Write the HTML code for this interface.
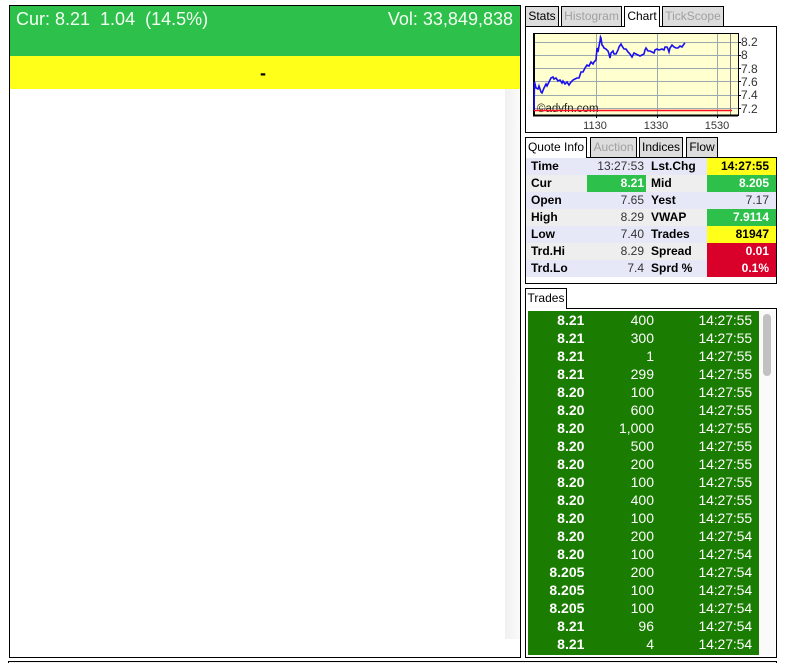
<!DOCTYPE html>
<html><head><meta charset="utf-8"><style>
html,body{margin:0;padding:0;background:#fff;width:786px;height:663px;overflow:hidden}
body{font-family:"Liberation Sans",sans-serif;position:relative}
.a,.a *{box-sizing:border-box}
.a{position:absolute}
.tab{position:absolute;top:6px;height:21px;border:1px solid #000;background:#ddd;font-size:12px;line-height:19px;text-align:center;color:#000;box-sizing:border-box}
.off{color:#a0a0a0}
.on{background:#fff;border-bottom:none;z-index:3}
.r{position:absolute;left:1px;width:250px;height:17px;font-size:12px;line-height:17px}
.r div{position:absolute;top:0;height:17px}
.l{left:5px;font-weight:bold}
.v{left:61px;width:59px;text-align:right;padding-right:2px;color:#333}
.l2{left:125px;font-weight:bold}
.v2{left:181px;width:69px;text-align:right;padding-right:7px;color:#333}
.g{background:#2dc04a;color:#fff!important;font-weight:bold}
.y{background:#ffff19;color:#000!important;font-weight:bold}
.d{background:#d9002a;color:#fff!important;font-weight:bold}
.t{position:absolute;left:0;width:231px;height:18px;font-size:14px;line-height:18px;color:#fff}
.t span{position:absolute;top:0;text-align:right}
.p{right:174.6px;font-weight:bold}
.q{right:105px}
.m{right:7px;letter-spacing:-.12px}
</style></head><body>

<div class="a" style="left:9px;top:5px;width:512px;height:653px;border:1px solid #000;background:#fff"></div>
<div class="a" style="left:10px;top:6px;width:510px;height:50px;background:#2dc04a;color:#f4fff4;font-size:18px;line-height:27px">
<span style="position:absolute;left:6px;top:0;white-space:pre">Cur: 8.21  1.04  (14.5%)</span>
<span style="position:absolute;right:7px;top:0">Vol: 33,849,838</span></div>
<div class="a" style="left:10px;top:56px;width:510px;height:33px;background:#ffff19;text-align:center;font-size:18px;font-weight:bold;line-height:35px;color:#000;padding-right:4px">-</div>
<div class="a" style="left:505px;top:89px;width:15px;height:550px;background:linear-gradient(90deg,#f0f0f0,#fbfbfb)"></div>

<div class="tab" style="left:525px;width:34px">Stats</div>
<div class="tab off" style="left:561px;width:61px">Histogram</div>
<div class="tab on" style="left:624px;width:36px;height:21px">Chart</div>
<div class="tab off" style="left:662px;width:62px">TickScope</div>
<div class="a" style="left:525px;top:26px;width:252px;height:107px;border:1px solid #000;background:#fff"></div>

<svg class="a" style="left:528px;top:30px" width="230" height="100" viewBox="0 0 230 100">
<rect x="5.5" y="3.5" width="205" height="82" fill="#ffffcf" stroke="#000"/>
<g stroke="#9aa9b0" stroke-width="1" fill="none">
<path d="M6 12.5H210M6 25.5H210M6 38.5H210M6 51.5H210M6 65.5H210M6 78.5H210M68.5 4V85M129.5 4V85M189.5 4V85"/>
</g>
<path d="M202.5 4V85" stroke="#8a7a7a"/>
<path d="M6 4V86M5 85.5H210" stroke="#000" stroke-width="2" fill="none"/>
<path d="M68.5 85v3M129.5 85v3M189.5 85v3M210 12.5h3M210 25.5h3M210 38.5h3M210 51.5h3M210 65.5h3M210 78.5h3" stroke="#000" fill="none"/>
<text x="9" y="82" font-family="Liberation Sans" font-size="11.5" fill="#222">©advfn.com</text>
<path d="M6 80.5H204" stroke="#ff1020" stroke-width="1.4"/>
<polyline fill="none" stroke="#1a10ee" stroke-width="1.6" points="6,80 6.5,52 8,58 10,59 11,56 13,62 14,63 16,58 18,54 19,56 21,52 23,48 25,47 26,49 28,48 30,51 32,50 34,53 35,51 37,54 39,52 41,55 43,52 45,50 47,49 49,48 51,48 53,42 55,42 57,38 59,35 61,36 63,32 65,34 66,32 68,30 69,18 70,22 71,16 72,11 72.5,7 73,8 74,15 75,16 76,18 78,19 80,21 81,24 82,28 83,23 85,21 86,24 88,24 90,20 91,17 93,14 94,16 96,19 98,19 100,22 102,24 104,27 106,23 108,24 110,25 112,26 114,25 116,24 117,20 118,18 120,21 122,21 124,22 126,23 127,20 129,19 131,20 134,19 136,20 137,17 139,17 140,19 141,22 142,18 144,15 146,17 148,18 150,18 152,16 154,17 156,14 157,13"/>
<g font-family="Liberation Sans" font-size="12" fill="#333">
<text x="213" y="16">8.2</text>
<text x="213" y="29">8</text>
<text x="213" y="43">7.8</text>
<text x="213" y="56">7.6</text>
<text x="213" y="69">7.4</text>
<text x="213" y="83">7.2</text>
</g>
<g font-family="Liberation Sans" font-size="11" fill="#333" text-anchor="middle">
<text x="67" y="99">1130</text><text x="128" y="99">1330</text><text x="189" y="99">1530</text>
</g>
</svg>

<div class="tab on" style="left:525px;top:137px;width:62px;height:21px">Quote Info</div>
<div class="tab off" style="left:590px;top:137px;width:47px">Auction</div>
<div class="tab" style="left:639px;top:137px;width:44px">Indices</div>
<div class="tab" style="left:686px;top:137px;width:32px">Flow</div>

<div class="a" style="left:525px;top:157px;width:252px;height:127px;border:1px solid #000;background:#fff">
<div class="r" style="left:0;top:0;background:#e6e8f8"><div class="l">Time</div><div class="v">13:27:53</div><div class="l2">Lst.Chg</div><div class="v2 y">14:27:55</div></div>
<div class="r" style="left:0;top:17px;background:#eee"><div class="l">Cur</div><div class="v g">8.21</div><div class="l2">Mid</div><div class="v2 g">8.205</div></div>
<div class="r" style="left:0;top:34px;background:#e6e8f8"><div class="l">Open</div><div class="v">7.65</div><div class="l2">Yest</div><div class="v2">7.17</div></div>
<div class="r" style="left:0;top:51px;background:#eee"><div class="l">High</div><div class="v">8.29</div><div class="l2">VWAP</div><div class="v2 g">7.9114</div></div>
<div class="r" style="left:0;top:68px;background:#e6e8f8"><div class="l">Low</div><div class="v">7.40</div><div class="l2">Trades</div><div class="v2 y">81947</div></div>
<div class="r" style="left:0;top:85px;background:#eee"><div class="l">Trd.Hi</div><div class="v">8.29</div><div class="l2">Spread</div><div class="v2 d">0.01</div></div>
<div class="r" style="left:0;top:102px;background:#e6e8f8"><div class="l">Trd.Lo</div><div class="v">7.4</div><div class="l2">Sprd %</div><div class="v2 d">0.1%</div></div>
</div>

<div class="tab on" style="left:525px;top:288px;width:42px;height:21px">Trades</div>
<div class="a" style="left:525px;top:308px;width:252px;height:350px;border:1px solid #000;background:#fff"></div>
<div class="a" style="left:759px;top:311px;width:16px;height:344px;background:#fafafa"></div>
<div class="a" style="left:763px;top:314px;width:8px;height:62px;border-radius:4px;background:#c1c1c1"></div>
<div class="a" style="left:528px;top:311px;width:231px;height:344px;background:#1a7c00;overflow:hidden">
<div class="t" style="top:0"><span class="p">8.21</span><span class="q">400</span><span class="m">14:27:55</span></div>
<div class="t" style="top:18px"><span class="p">8.21</span><span class="q">300</span><span class="m">14:27:55</span></div>
<div class="t" style="top:36px"><span class="p">8.21</span><span class="q">1</span><span class="m">14:27:55</span></div>
<div class="t" style="top:54px"><span class="p">8.21</span><span class="q">299</span><span class="m">14:27:55</span></div>
<div class="t" style="top:72px"><span class="p">8.20</span><span class="q">100</span><span class="m">14:27:55</span></div>
<div class="t" style="top:90px"><span class="p">8.20</span><span class="q">600</span><span class="m">14:27:55</span></div>
<div class="t" style="top:108px"><span class="p">8.20</span><span class="q">1,000</span><span class="m">14:27:55</span></div>
<div class="t" style="top:126px"><span class="p">8.20</span><span class="q">500</span><span class="m">14:27:55</span></div>
<div class="t" style="top:144px"><span class="p">8.20</span><span class="q">200</span><span class="m">14:27:55</span></div>
<div class="t" style="top:162px"><span class="p">8.20</span><span class="q">100</span><span class="m">14:27:55</span></div>
<div class="t" style="top:180px"><span class="p">8.20</span><span class="q">400</span><span class="m">14:27:55</span></div>
<div class="t" style="top:198px"><span class="p">8.20</span><span class="q">100</span><span class="m">14:27:55</span></div>
<div class="t" style="top:216px"><span class="p">8.20</span><span class="q">200</span><span class="m">14:27:54</span></div>
<div class="t" style="top:234px"><span class="p">8.20</span><span class="q">100</span><span class="m">14:27:54</span></div>
<div class="t" style="top:252px"><span class="p">8.205</span><span class="q">200</span><span class="m">14:27:54</span></div>
<div class="t" style="top:270px"><span class="p">8.205</span><span class="q">100</span><span class="m">14:27:54</span></div>
<div class="t" style="top:288px"><span class="p">8.205</span><span class="q">100</span><span class="m">14:27:54</span></div>
<div class="t" style="top:306px"><span class="p">8.21</span><span class="q">96</span><span class="m">14:27:54</span></div>
<div class="t" style="top:324px"><span class="p">8.21</span><span class="q">4</span><span class="m">14:27:54</span></div>
</div>

<div class="a" style="left:8px;top:661px;width:769px;height:10px;border:1px solid #000;background:#f0f0f0"></div>
</body></html>
